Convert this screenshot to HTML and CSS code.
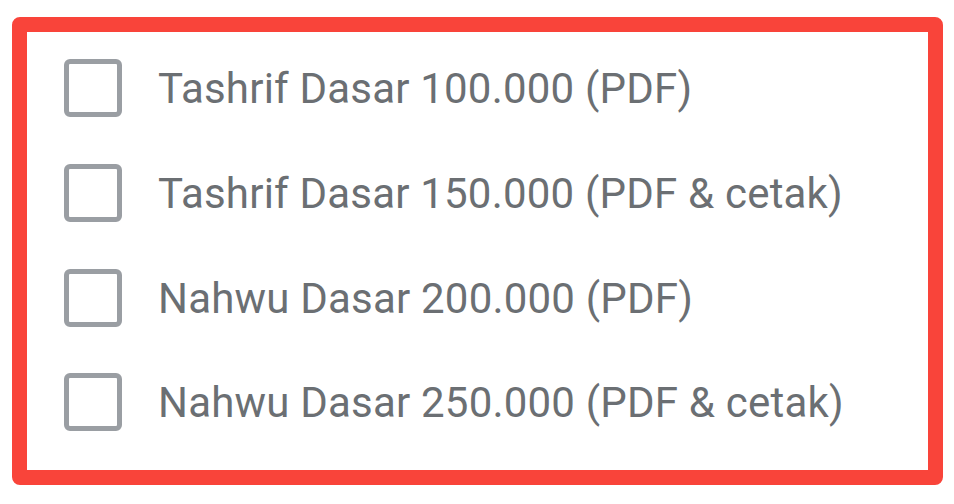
FILE: index.html
```html
<!DOCTYPE html>
<html>
<head>
<meta charset="utf-8">
<link rel="stylesheet" href="styles.css">
</head>
<body>
<div class="frame">
  <ul class="list">
    <li class="item"><span class="box"></span><span class="label">Tashrif Dasar 100.000 (PDF)</span></li>
    <li class="item"><span class="box"></span><span class="label">Tashrif Dasar 150.000 (PDF &amp; cetak)</span></li>
    <li class="item"><span class="box"></span><span class="label">Nahwu Dasar 200.000 (PDF)</span></li>
    <li class="item"><span class="box"></span><span class="label">Nahwu Dasar 250.000 (PDF &amp; cetak)</span></li>
  </ul>
</div>
</body>
</html>
```

FILE: styles.css
```css
html, body {
  margin: 0;
  padding: 0;
  background: #ffffff;
}
body {
  width: 954px;
  height: 504px;
  padding: 17px 11px 0 12px;
  box-sizing: border-box;
  font-family: Roboto, "Liberation Sans", sans-serif;
}
.frame {
  width: 931px;
  height: 468px;
  box-sizing: border-box;
  border: 15px solid #f9443a;
  border-radius: 8px;
  padding: 4px 0 0 37px;
}
.list {
  list-style: none;
  margin: 0;
  padding: 0;
  display: flex;
  flex-direction: column;
}
.item {
  height: 104.7px;
  display: flex;
  align-items: center;
}
.box {
  width: 58px;
  height: 58px;
  box-sizing: border-box;
  border: 5px solid #9a9ea3;
  border-radius: 6px;
  flex: none;
}
.label {
  margin-left: 36px;
  font-size: 42px;
  letter-spacing: 0.2px;
  color: #6b6f73;
  line-height: 1;
  padding-top: 2px;
}
```
